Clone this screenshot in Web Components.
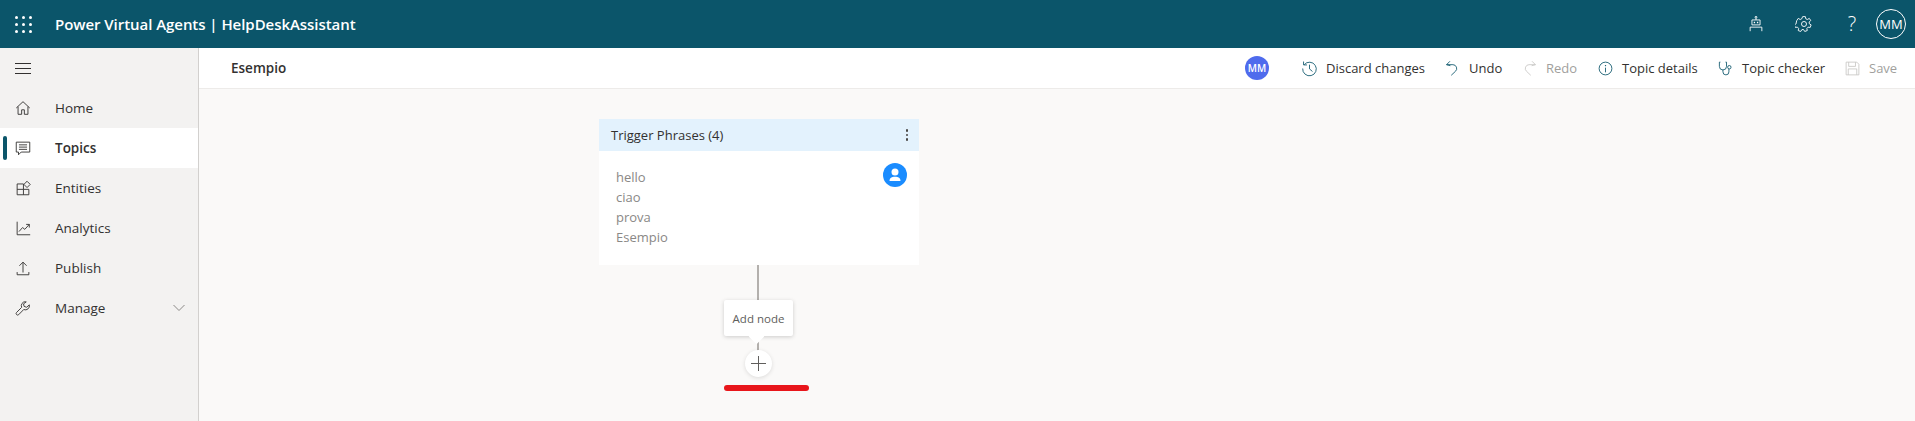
<!DOCTYPE html>
<html lang="en">
<head>
<meta charset="utf-8">
<title>Power Virtual Agents</title>
<style>
  html, body { margin: 0; height: 100%; overflow: hidden; }
  body { font-family: "Open Sans", "Noto Sans", sans-serif; font-size: 14px; color: #323130; }
</style>
</head>
<body>
<pva-app>
  <pva-topbar slot="top" title-text="Power Virtual Agents | HelpDeskAssistant"></pva-topbar>
  <pva-nav slot="nav">
    <pva-nav-item icon="home">Home</pva-nav-item>
    <pva-nav-item icon="topics" active>Topics</pva-nav-item>
    <pva-nav-item icon="entities">Entities</pva-nav-item>
    <pva-nav-item icon="analytics">Analytics</pva-nav-item>
    <pva-nav-item icon="publish">Publish</pva-nav-item>
    <pva-nav-item icon="manage" chevron>Manage</pva-nav-item>
  </pva-nav>
  <pva-toolbar slot="toolbar" heading="Esempio">
    <pva-tool icon="discard" w="99">Discard changes</pva-tool>
    <pva-tool icon="undo" w="33">Undo</pva-tool>
    <pva-tool icon="redo" w="32" disabled>Redo</pva-tool>
    <pva-tool icon="info" w="76">Topic details</pva-tool>
    <pva-tool icon="checker" w="83">Topic checker</pva-tool>
    <pva-tool icon="save" w="28" disabled>Save</pva-tool>
  </pva-toolbar>
  <pva-canvas slot="canvas">
    <pva-trigger-card title-text="Trigger Phrases (4)">
      <div>hello</div>
      <div>ciao</div>
      <div>prova</div>
      <div>Esempio</div>
    </pva-trigger-card>
    <pva-add-node></pva-add-node>
  </pva-canvas>
</pva-app>

<script>
// Icons, all drawn on a 20x20 box with a 1px stroke
const ICONS = {
  home: '<path d="M2.5 10 10 3l7.5 7M4.5 8.5V17h4v-5h3v5h4V8.5"/>',
  topics: '<path d="M2.5 3.5h15v11H8l-3 3v-3H2.5z"/><path d="M5.5 6.5h9M5.5 9h9M5.5 11.5h9"/>',
  entities: '<path d="M3.5 5.5h7v6h6v6h-13zM3.5 11.5h7v6"/><path d="M14.5 2.5l3.5 3.5-3.5 3.5L11 6z"/>',
  analytics: '<path d="M3.5 3v14.5H18"/><path d="M5.5 14l4-4.5 2.5 2 5-5.5M13.5 6h3.5v3.5"/>',
  publish: '<path d="M10 15V3.5M6 7.5l4-4 4 4M3.5 14.5v3h13v-3"/>',
  manage: '<path d="M12.5 3a4.5 4.5 0 0 0-4 6.3L2.8 15a1.7 1.7 0 0 0 2.4 2.4l5.6-5.7A4.5 4.5 0 0 0 17 6.5l-3 2.7-2.8-1-.6-2.8 3-2.2a4.5 4.5 0 0 0-1.100-.200z"/>',
  discard: '<path d="M3.800 5.500A8 8 0 1 1 2 10"/><path d="M3 1.800v4h4M10 5.500V10.500l3.500 3"/>',
  undo: '<path d="M7 1.500 3 5.500l4.500 1.200M3 5.500h7.500a4.500 4.500 0 0 1 3 7.800L8.500 18"/>',
  redo: '<path d="M13 1.500l4 4-4.500 1.200M17 5.500H9.500a4.500 4.500 0 0 0-3 7.800l5 4.700"/>',
  info: '<circle cx="10" cy="10" r="7.500"/><path d="M10 9v5.500"/><path d="M10 6v1.300" stroke-width="1.400"/>',
  checker: '<path d="M4 2.500H2.800v5a4.200 4.200 0 0 0 8.400 0v-5H10M7 11.700V14a3.500 3.500 0 0 0 7 0v-3.500"/><circle cx="14.500" cy="8.500" r="2"/>',
  save: '<path d="M2.500 2.500h12.500l2.500 2.500v12.500h-15z"/><path d="M5.500 2.500v5h8v-5M5 17.500v-7h10v7"/>',
  robot: '<circle cx="10" cy="2.500" r="1"/><path d="M10 3.500v2M5.500 5.500h9v5.500h-9zM3.500 18v-4.500h13V18"/><path d="M7.500 8.300h1.500M11 8.300h1.500" stroke-width="1.500"/>',
  gear: '<circle cx="10" cy="10" r="2.800"/><path d="M8.500 1.800h3l.5 2.400 1.700.8 2.200-1.200 1.600 2.300-1.800 1.700.2 1.900 2 1.300-1 2.800-2.400-.3-1.300 1.400.4 2.400-2.800 1-1.300-2.100h-1.800l-1.300 2.100-2.800-1 .4-2.400-1.300-1.400-2.400.3-1-2.800 2-1.300.2-1.900L2 6.100l1.600-2.300L5.800 5l1.700-.8z"/>'
};

function iconSvg(name, size) {
  return `<svg width="${size}" height="${size}" viewBox="0 0 20 20" fill="none" stroke="currentColor" stroke-width="1">${ICONS[name] || ""}</svg>`;
}

class PvaApp extends HTMLElement {
  constructor() {
    super();
    this.attachShadow({ mode: "open" });
    this.shadowRoot.innerHTML = `
      <style>
        :host { display: grid; grid-template-columns: 199px 1fr; grid-template-rows: 48px 41px 1fr; height: 421px; }
        .top { grid-column: 1 / 3; }
        .nav { grid-row: 2 / 4; min-height: 0; }
      </style>
      <div class="top"><slot name="top"></slot></div>
      <div class="nav"><slot name="nav"></slot></div>
      <div><slot name="toolbar"></slot></div>
      <div><slot name="canvas"></slot></div>
    `;
  }
}

class PvaTopbar extends HTMLElement {
  constructor() {
    super();
    this.attachShadow({ mode: "open" });
  }

  connectedCallback() {
    this.shadowRoot.innerHTML = `
      <style>
        :host { display: flex; align-items: center; height: 48px; background: #0b556a; color: #fff; }
        .waffle { width: 55px; display: flex; justify-content: flex-start; padding-left: 15px; box-sizing: border-box; }
        .waffle i { display: grid; grid-template-columns: repeat(3, 3px); gap: 4px; }
        .waffle b { width: 3px; height: 3px; background: #fff; border-radius: 50%; }
        h1 { margin: 0; font-size: 15px; font-weight: 600; flex: 1; letter-spacing: -.05px; }
        .icons { display: flex; align-items: center; }
        .icon { width: 48px; display: flex; justify-content: center; }
        .q { font-size: 20px; font-weight: 300; line-height: 24px; }
        .me { width: 30px; height: 30px; margin: 0 9px 0 0; box-sizing: border-box; border: 1px solid #fff; border-radius: 50%;
              display: flex; align-items: center; justify-content: center; font-size: 13px; }
      </style>
      <div class="waffle"><i>${"<b></b>".repeat(9)}</i></div>
      <h1>${this.getAttribute("title-text")}</h1>
      <div class="icons">
        <div class="icon">${iconSvg("robot", 18)}</div>
        <div class="icon">${iconSvg("gear", 18)}</div>
        <div class="icon q">?</div>
        <div class="me">MM</div>
      </div>
    `;
  }
}

class PvaNav extends HTMLElement {
  constructor() {
    super();
    this.attachShadow({ mode: "open" });
    this.shadowRoot.innerHTML = `
      <style>
        :host { display: block; height: 100%; box-sizing: border-box; background: #f3f2f1; border-right: 1px solid #d2d0ce; }
        .burger { height: 40px; display: flex; align-items: center; padding-left: 15px; }
        .burger i { display: block; width: 16px; height: 9px; border-top: 1px solid #323130; border-bottom: 1px solid #323130; position: relative; }
        .burger i::after { content: ""; position: absolute; left: 0; right: 0; top: 4px; height: 1px; background: #323130; }
      </style>
      <div class="burger"><i></i></div>
      <slot></slot>
    `;
  }
}

class PvaNavItem extends HTMLElement {
  constructor() {
    super();
    this.attachShadow({ mode: "open" });
  }

  connectedCallback() {
    const active = this.hasAttribute("active");
    const chevron = this.hasAttribute("chevron")
      ? `<svg class="chev" width="12" height="8" viewBox="0 0 12 8" fill="none" stroke="#8a8886"><path d="M.5 1l5.500 5.500L11.500 1"/></svg>`
      : "";
    this.shadowRoot.innerHTML = `
      <style>
        :host { display: flex; align-items: center; height: 40px; padding-left: 14px; position: relative;
                background: ${active ? "#fff" : "transparent"}; font-weight: ${active ? 600 : 400}; color: #323130; }
        .ico { width: 41px; display: flex; color: #323130; }
        .txt { flex: 1; font-size: 13.500px; }
        .chev { margin-right: 13px; }
        .bar { position: absolute; left: 3px; top: 8px; bottom: 8px; width: 4px; border-radius: 2px; background: #0b556a; }
      </style>
      ${active ? '<span class="bar"></span>' : ""}
      <span class="ico">${iconSvg(this.getAttribute("icon"), 18)}</span>
      <span class="txt"><slot></slot></span>
      ${chevron}
    `;
  }
}

class PvaToolbar extends HTMLElement {
  constructor() {
    super();
    this.attachShadow({ mode: "open" });
  }

  connectedCallback() {
    this.shadowRoot.innerHTML = `
      <style>
        :host { display: flex; align-items: center; height: 41px; box-sizing: border-box; padding: 0 18px 0 32px; background: #fff; border-bottom: 1px solid #edebe9; }
        h2 { margin: 0; flex: 1; font-size: 13.500px; font-weight: 600; color: #323130; }
        .who { width: 24px; height: 24px; margin-right: 32px; border-radius: 50%; background: #4f6bed; color: #fff;
               display: flex; align-items: center; justify-content: center; font-size: 10px; font-weight: 600; }
        .tools { display: flex; gap: 19px; }
      </style>
      <h2>${this.getAttribute("heading")}</h2>
      <div class="who">MM</div>
      <div class="tools"><slot></slot></div>
    `;
  }
}

class PvaTool extends HTMLElement {
  constructor() {
    super();
    this.attachShadow({ mode: "open" });
  }

  connectedCallback() {
    const off = this.hasAttribute("disabled");
    this.shadowRoot.innerHTML = `
      <style>
        :host { display: flex; align-items: center; gap: 8px; color: ${off ? "#a19f9d" : "#323130"}; }
        .ico { display: flex; color: ${off ? "#c8c6c4" : "#0b556a"}; }
        .txt { width: ${this.getAttribute("w")}px; white-space: nowrap; font-size: 13px; }
      </style>
      <span class="ico">${iconSvg(this.getAttribute("icon"), 17)}</span>
      <span class="txt"><slot></slot></span>
    `;
  }
}

// Free canvas: the nodes sit at their place in the diagram
class PvaCanvas extends HTMLElement {
  constructor() {
    super();
    this.attachShadow({ mode: "open" });
    this.shadowRoot.innerHTML = `
      <style>
        :host { display: block; position: relative; height: 332px; background: #faf9f8; }
      </style>
      <slot></slot>
    `;
  }
}

class PvaTriggerCard extends HTMLElement {
  constructor() {
    super();
    this.attachShadow({ mode: "open" });
  }

  connectedCallback() {
    this.shadowRoot.innerHTML = `
      <style>
        :host { display: block; position: absolute; left: 400px; top: 30px; width: 320px; height: 146px; background: #fff; }
        header { height: 32px; box-sizing: border-box; padding: 0 12px; display: flex; align-items: center; justify-content: space-between; background: #e3f2fd; font-size: 13px; color: #323130; }
        .dots { display: grid; gap: 2px; margin-right: -1px; }
        .dots b { width: 2.500px; height: 2.500px; border-radius: 50%; background: #484644; }
        .body { position: relative; padding: 16px 17px; font-size: 13px; line-height: 20px; color: #8a8886; }
        .user { position: absolute; right: 12px; top: 12px; width: 24px; height: 24px; border-radius: 50%; background: #1a8cff; }
      </style>
      <header><span>${this.getAttribute("title-text")}</span><span class="dots"><b></b><b></b><b></b></span></header>
      <div class="body">
        <slot></slot>
        <svg class="user" viewBox="0 0 24 24" fill="#fff"><circle cx="12" cy="9" r="3.500"/><path d="M6.500 18c0-3 2.200-4.300 5.500-4.300s5.500 1.300 5.500 4.300z"/></svg>
      </div>
    `;
  }
}

class PvaAddNode extends HTMLElement {
  constructor() {
    super();
    this.attachShadow({ mode: "open" });
    this.shadowRoot.innerHTML = `
      <style>
        :host { display: block; position: absolute; left: 525px; top: 176px; width: 70px; height: 130px; }
        .line { position: absolute; left: 33px; top: 0; width: 2px; height: 90px; background: #b3b0ad; }
        .tip { position: absolute; left: 0; top: 35px; width: 69px; height: 36px; background: #fff; border-radius: 2px; box-shadow: 0 1px 4px rgba(0,0,0,.18);
               display: flex; align-items: center; justify-content: center; font-size: 11.500px; color: #605e5c; }
        .tip::after { content: ""; position: absolute; left: 27px; top: 31px; width: 11px; height: 11px; background: #fff; transform: rotate(45deg); }
        .tip span { position: relative; z-index: 1; }
        .plus { position: absolute; left: 21px; top: 85px; width: 27px; height: 27px; border-radius: 50%; background: #fff; box-shadow: 0 1px 4px rgba(0,0,0,.12);
                display: flex; align-items: center; justify-content: center; }
        .mark { position: absolute; left: 0; top: 120px; width: 85px; height: 6px; border-radius: 3px; background: #e8161b; }
      </style>
      <div class="line"></div>
      <div class="tip"><span>Add node</span></div>
      <div class="plus"><svg width="15" height="15" viewBox="0 0 15 15" stroke="#605e5c"><path d="M7.500 0v15M0 7.500h15"/></svg></div>
      <div class="mark"></div>
    `;
  }
}

customElements.define("pva-app", PvaApp);
customElements.define("pva-topbar", PvaTopbar);
customElements.define("pva-nav", PvaNav);
customElements.define("pva-nav-item", PvaNavItem);
customElements.define("pva-toolbar", PvaToolbar);
customElements.define("pva-tool", PvaTool);
customElements.define("pva-canvas", PvaCanvas);
customElements.define("pva-trigger-card", PvaTriggerCard);
customElements.define("pva-add-node", PvaAddNode);
</script>
</body>
</html>
